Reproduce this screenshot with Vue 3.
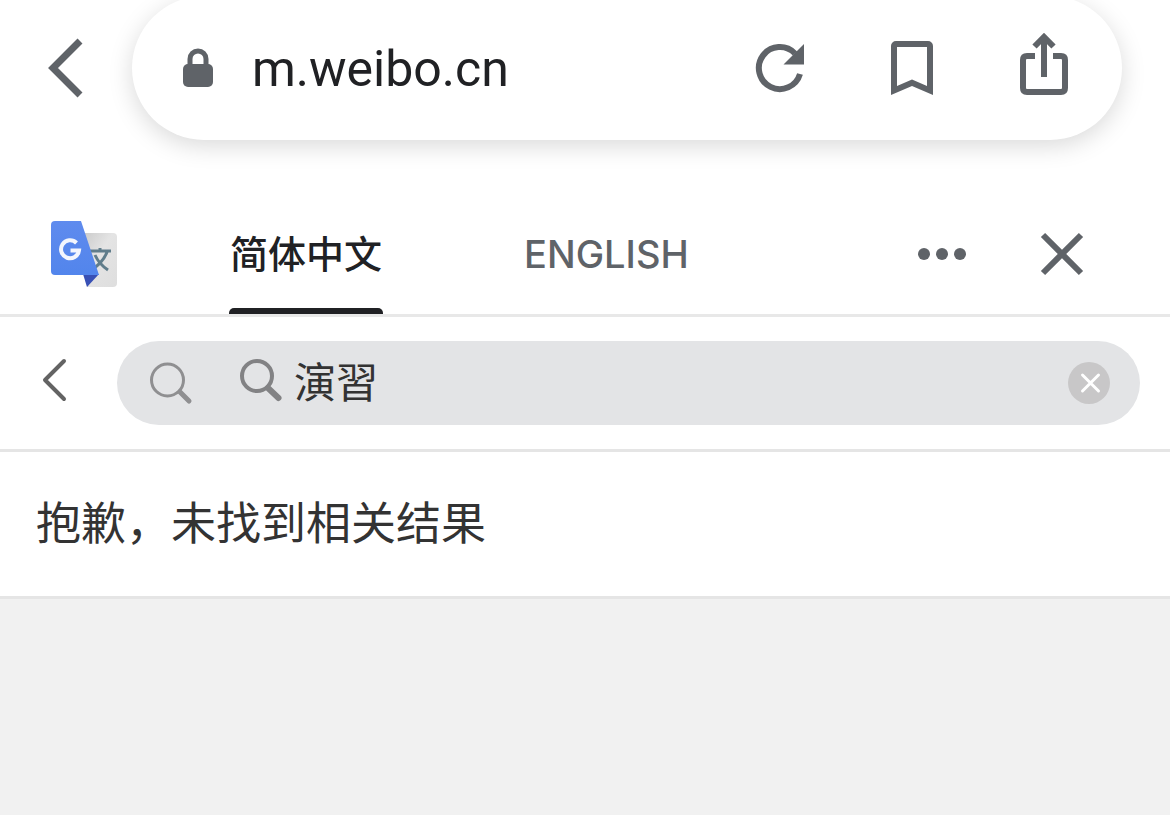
<script setup>
import { ref } from 'vue'

const query = ref('演習')
const languages = ['简体中文', 'ENGLISH']
const active = ref('简体中文')
</script>

<template>
  <div class="page">
    <header class="browser">
      <button class="plain back" type="button" aria-label="Back">
        <svg width="36" height="60" viewBox="0 0 36 60"><path d="M32 3 5 30l27 27" fill="none" stroke="#5f6368" stroke-width="7" /></svg>
      </button>
      <div class="address">
        <svg width="32" height="40" viewBox="0 0 32 40">
          <rect x="1" y="16" width="30" height="23" rx="5" fill="#5f6368" />
          <path d="M8 18v-7a8 8 0 0 1 16 0v7" fill="none" stroke="#5f6368" stroke-width="5" />
        </svg>
        <span class="host">m.weibo.cn</span>
        <div class="actions">
          <button class="plain" type="button" aria-label="Reload">
            <svg width="50" height="50" viewBox="0 0 50 50">
              <path d="M45 31A21 21 0 1 1 40 10.500" fill="none" stroke="#5f6368" stroke-width="6" />
              <path d="M49 1v20.500H28.500z" fill="#5f6368" />
            </svg>
          </button>
          <button class="plain" type="button" aria-label="Bookmark">
            <svg width="44" height="56" viewBox="0 0 44 56">
              <path fill-rule="evenodd" fill="#5f6368" d="M6 1h32a5 5 0 0 1 5 5v49l-21-9-21 9V6a5 5 0 0 1 5-5zM7 7v39l15-6.500L37 46V7z" />
            </svg>
          </button>
          <button class="plain share" type="button" aria-label="Share">
            <svg width="50" height="64" viewBox="0 0 50 64">
              <path d="M16 24H8q-4 0-4 4v28q0 4 4 4h34q4 0 4-4V28q0-4-4-4h-8" fill="none" stroke="#5f6368" stroke-width="6" />
              <path d="M25 45V5M15.500 14.500 25 5l9.500 9.500" fill="none" stroke="#5f6368" stroke-width="6" />
            </svg>
          </button>
        </div>
      </div>
    </header>

    <section class="translate">
      <svg width="68" height="68" viewBox="0 0 68 68" role="img" aria-label="Google Translate">
        <defs>
          <linearGradient id="paper" x1="0" y1="0" x2="1" y2="1">
            <stop offset="0" stop-color="#c8c8c8" /><stop offset=".45" stop-color="#e4e4e4" /><stop offset="1" stop-color="#dedede" />
          </linearGradient>
          <linearGradient id="blue" x1="0" y1="0" x2="0" y2="1">
            <stop offset="0" stop-color="#5f8bee" /><stop offset="1" stop-color="#5285ec" />
          </linearGradient>
        </defs>
        <path d="M30 13h33q4 0 4 4v46q0 4-4 4H37z" fill="url(#paper)" />
        <path d="M38 31h23M50 28v4M57 32q-4 11-17 19M45 35q4 9 13 15" fill="none" stroke="#607d8b" stroke-width="3" />
        <path d="M33 54h16L37 67z" fill="#3850b5" />
        <path d="M5 1h26l18 54H5q-4 0-4-4V5q0-4 4-4z" fill="url(#blue)" />
        <path d="M26.500 23A9 9 0 1 0 29 30.500H20.500" fill="none" stroke="#f3f6fd" stroke-width="4" />
      </svg>
      <nav class="tabs">
        <button
          v-for="language in languages"
          :key="language"
          type="button"
          class="tab"
          :class="{ active: active === language }"
          @click="active = language"
        >{{ language }}</button>
      </nav>
      <button class="plain more" type="button" aria-label="More">
        <svg width="50" height="14" viewBox="0 0 50 14" fill="#5f6368"><circle cx="7" cy="7" r="6" /><circle cx="25" cy="7" r="6" /><circle cx="43" cy="7" r="6" /></svg>
      </button>
      <button class="plain" type="button" aria-label="Close">
        <svg width="44" height="44" viewBox="0 0 44 44"><path d="m3 3 38 38M41 3 3 41" stroke="#5f6368" stroke-width="6" /></svg>
      </button>
    </section>

    <form class="search" @submit.prevent>
      <button class="plain previous" type="button" aria-label="Previous page">
        <svg width="26" height="44" viewBox="0 0 26 44"><path d="M23 3 4 22l19 19" fill="none" stroke="#636363" stroke-width="4" stroke-linecap="round" stroke-linejoin="round" /></svg>
      </button>
      <div class="field">
        <svg width="44" height="44" viewBox="0 0 44 44" fill="none" stroke="#8f8f91">
          <circle cx="18.500" cy="19" r="16" stroke-width="3" /><path d="m31 31 9 9" stroke-width="5" stroke-linecap="round" />
        </svg>
        <label class="term" for="query">
          <svg width="44" height="44" viewBox="0 0 44 44" fill="none" stroke="#828284">
            <circle cx="19" cy="18" r="15" stroke-width="4" /><path d="m30 30 10.500 10" stroke-width="6" stroke-linecap="round" />
          </svg>
        </label>
        <input id="query" v-model="query" type="text" aria-label="搜索" />
        <button class="plain" type="button" aria-label="Clear" @click="query = ''">
          <svg width="42" height="42" viewBox="0 0 42 42"><circle cx="21" cy="21" r="21" fill="#c8c7c8" /><path d="m14.500 13 16 16m0-16-16 16" stroke="#fff" stroke-width="3" stroke-linecap="round" /></svg>
        </button>
      </div>
    </form>

    <p class="empty">抱歉，未找到相关结果</p>
  </div>
</template>

<style>
body {
  background: #f1f1f1;
}
</style>

<style scoped>
.page {
  min-height: 100vh;
  overflow: hidden;
  background: #f1f1f1;
  font-family: Inter, "Noto Sans CJK SC", sans-serif;
  color: #333;
}

svg {
  display: block;
  flex: none;
}

.plain {
  flex: none;
  padding: 0;
  border: 0;
  background: none;
}

.browser {
  display: flex;
  align-items: center;
  padding: 0 48px 52px 0;
  margin-top: -4px;
  background: #fff;
}

.back {
  display: flex;
  justify-content: center;
  width: 132px;
}

.address {
  flex: 1;
  display: flex;
  align-items: center;
  box-sizing: border-box;
  height: 144px;
  padding: 0 53px 0 50px;
  border-radius: 72px;
  background: #fff;
  box-shadow: 0 6px 24px rgba(0, 0, 0, 0.15);
}

.host {
  flex: 1;
  margin-left: 38px;
  padding-top: 2px;
  font-family: Roboto, Inter, sans-serif;
  font-size: 50px;
  line-height: 60px;
  color: #202124;
}

.actions {
  display: flex;
  align-items: center;
  gap: 85px;
}

.share {
  padding-bottom: 8px;
}

.translate {
  display: flex;
  align-items: center;
  height: 120px;
  padding: 2px 86px 0 50px;
  border-bottom: 3px solid #e8e8e8;
  background: #fff;
}

.tabs {
  flex: 1;
  align-self: stretch;
  display: flex;
  gap: 140px;
  margin-left: 111px;
}

.tab {
  position: relative;
  padding: 0 1px;
  border: 0;
  background: none;
  font: 500 38px/44px Inter, "Noto Sans CJK SC", sans-serif;
  color: #5f6368;
}

.tab.active {
  color: #202124;
}

.tab.active::after {
  content: "";
  position: absolute;
  right: 0;
  bottom: 0;
  left: 0;
  height: 6px;
  border-radius: 5px 5px 0 0;
  background: #202124;
}

.more {
  margin-right: 73px;
}

.search {
  display: flex;
  align-items: center;
  gap: 50px;
  padding: 24px 30px 24px 41px;
  border-bottom: 3px solid #e5e5e5;
  background: #fff;
}

.previous {
  padding-bottom: 6px;
}

.field {
  flex: 1;
  display: flex;
  align-items: center;
  min-width: 0;
  height: 84px;
  padding: 0 30px 0 32px;
  border-radius: 42px;
  background: #e3e4e6;
}

.term {
  margin: 0 12px 6px 45px;
}

.field input {
  flex: 1;
  min-width: 0;
  height: 64px;
  padding: 0 0 8px;
  border: 0;
  outline: 0;
  background: none;
  font: 42px "Noto Sans CJK TC", "Noto Sans CJK SC", sans-serif;
  color: #333;
}

.empty {
  margin: 0;
  padding: 40px 36px;
  border-bottom: 3px solid #e5e5e5;
  background: #fff;
  font-size: 45px;
  line-height: 64px;
}
</style>
